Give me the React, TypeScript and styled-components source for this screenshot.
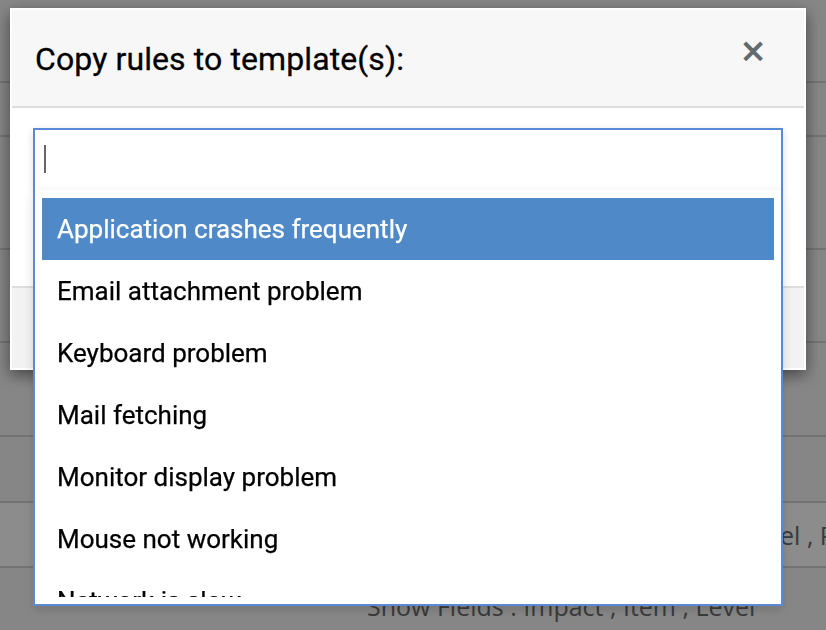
import React from 'react';
import styled, { createGlobalStyle } from 'styled-components';

const GlobalStyle = createGlobalStyle`
  html, body {
    margin: 0;
    padding: 0;
  }
  body {
    font-family: Roboto, 'Liberation Sans', Arial, sans-serif;
    background: #f5f5f5;
    overflow: hidden;
    -webkit-font-smoothing: antialiased;
  }
`;

const templates = [
  'Application crashes frequently',
  'Email attachment problem',
  'Keyboard problem',
  'Mail fetching',
  'Monitor display problem',
  'Mouse not working',
  'Network is slow',
  'Printer not responding',
];

// rows of the rules table that sits behind the dialog
const pageRows = [
  { height: 83 },
  { height: 54 },
  { height: 113 },
  { height: 93 },
  { height: 94 },
  { height: 66 },
  { height: 65, light: true, text: 'Show Fields : Impact , Item , Level , Priority', indent: 412 },
  { height: 78, text: 'Show Fields : Impact , Item , Level', indent: 367 },
];

export default function App() {
  return (
    <>
      <GlobalStyle />
      <Page>
        {pageRows.map((row, i) => (
          <PageRow key={i} height={row.height} light={row.light}>
            {row.text && <RowText indent={row.indent}>{row.text}</RowText>}
          </PageRow>
        ))}
      </Page>

      <Backdrop />

      <Modal>
        <Header>
          <Title>Copy rules to template(s):</Title>
          <Close type="button" aria-label="Close">×</Close>
        </Header>

        <Body>
          <Field>
            <Caret />
            <Dropdown>
              <List>
                {templates.map((name, i) => (
                  <Option key={name} active={i === 0}>
                    {name}
                  </Option>
                ))}
              </List>
            </Dropdown>
          </Field>
        </Body>

        <Footer />
      </Modal>
    </>
  );
}

const Page = styled.div`
  height: 630px;
  display: flex;
  flex-direction: column;
  background: #f5f5f5;
  overflow: hidden;
`;

const PageRow = styled.div<{ height: number; light?: boolean }>`
  flex: 0 0 ${({ height }) => height}px;
  box-sizing: border-box;
  border-bottom: 2px solid #d2d2d2;
  background: ${({ light }) => (light ? '#ffffff' : 'transparent')};
  display: flex;
  align-items: center;
  overflow: hidden;
`;

const RowText = styled.span<{ indent?: number }>`
  padding-left: ${({ indent }) => indent || 0}px;
  font-family: 'Open Sans', 'Liberation Sans', sans-serif;
  font-size: 25px;
  color: #6a6a6a;
  white-space: nowrap;
`;

const Backdrop = styled.div`
  position: fixed;
  inset: 0;
  background: rgba(0, 0, 0, 0.45);
`;

const Modal = styled.div`
  position: fixed;
  top: 8px;
  left: 10px;
  width: 796px;
  box-sizing: border-box;
  border: 2px solid #ffffff;
  background: #ffffff;
  box-shadow: 0 5px 15px rgba(0, 0, 0, 0.5);
`;

const Header = styled.div`
  height: 98px;
  box-sizing: border-box;
  padding: 2px 37px 0 23px;
  display: flex;
  align-items: center;
  justify-content: space-between;
  background: #f7f7f7;
  border-bottom: 2px solid #dedede;
`;

const Title = styled.h4`
  margin: 0;
  font-size: 32px;
  letter-spacing: 0.1px;
  font-weight: 400;
  color: #000;
  -webkit-text-stroke: 0.3px #000;
`;

const Close = styled.button`
  margin-top: -18px;
  padding: 0;
  border: 0;
  background: none;
  font-family: 'DejaVu Sans', sans-serif;
  font-size: 33px;
  font-weight: 700;
  line-height: 1;
  color: #62696f;
  cursor: pointer;
`;

const Body = styled.div`
  height: 178px;
  box-sizing: border-box;
  padding: 20px 21px;
`;

const Field = styled.div`
  position: relative;
  height: 62px;
  box-sizing: border-box;
  border: 2px solid #5a8ad6;
  border-bottom: 0;
  background: #fff;
  box-shadow: 0 2px 8px rgba(0, 0, 0, 0.12);
`;

const Caret = styled.span`
  position: absolute;
  left: 9px;
  top: 15px;
  width: 2px;
  height: 28px;
  background: #666;
`;

const Dropdown = styled.div`
  position: absolute;
  top: 60px;
  left: -2px;
  right: -2px;
  z-index: 2;
  padding: 8px 7px 7px;
  background: #fff;
  border: 2px solid #5a8ad6;
  border-top: 0;
  box-shadow: 0 4px 10px rgba(0, 0, 0, 0.15);
`;

const List = styled.ul`
  margin: 0;
  padding: 0;
  list-style: none;
  max-height: 399px;
  overflow: hidden;
`;

const Option = styled.li<{ active?: boolean }>`
  height: 62px;
  display: flex;
  align-items: center;
  padding-left: 15px;
  font-size: 26px;
  color: ${({ active }) => (active ? '#fff' : '#000')};
  background: ${({ active }) => (active ? '#5089c8' : 'transparent')};
  -webkit-text-stroke: 0.25px ${({ active }) => (active ? '#fff' : '#000')};
`;

const Footer = styled.div`
  height: 80px;
  background: #f2f2f2;
  border-top: 2px solid #dedede;
`;
